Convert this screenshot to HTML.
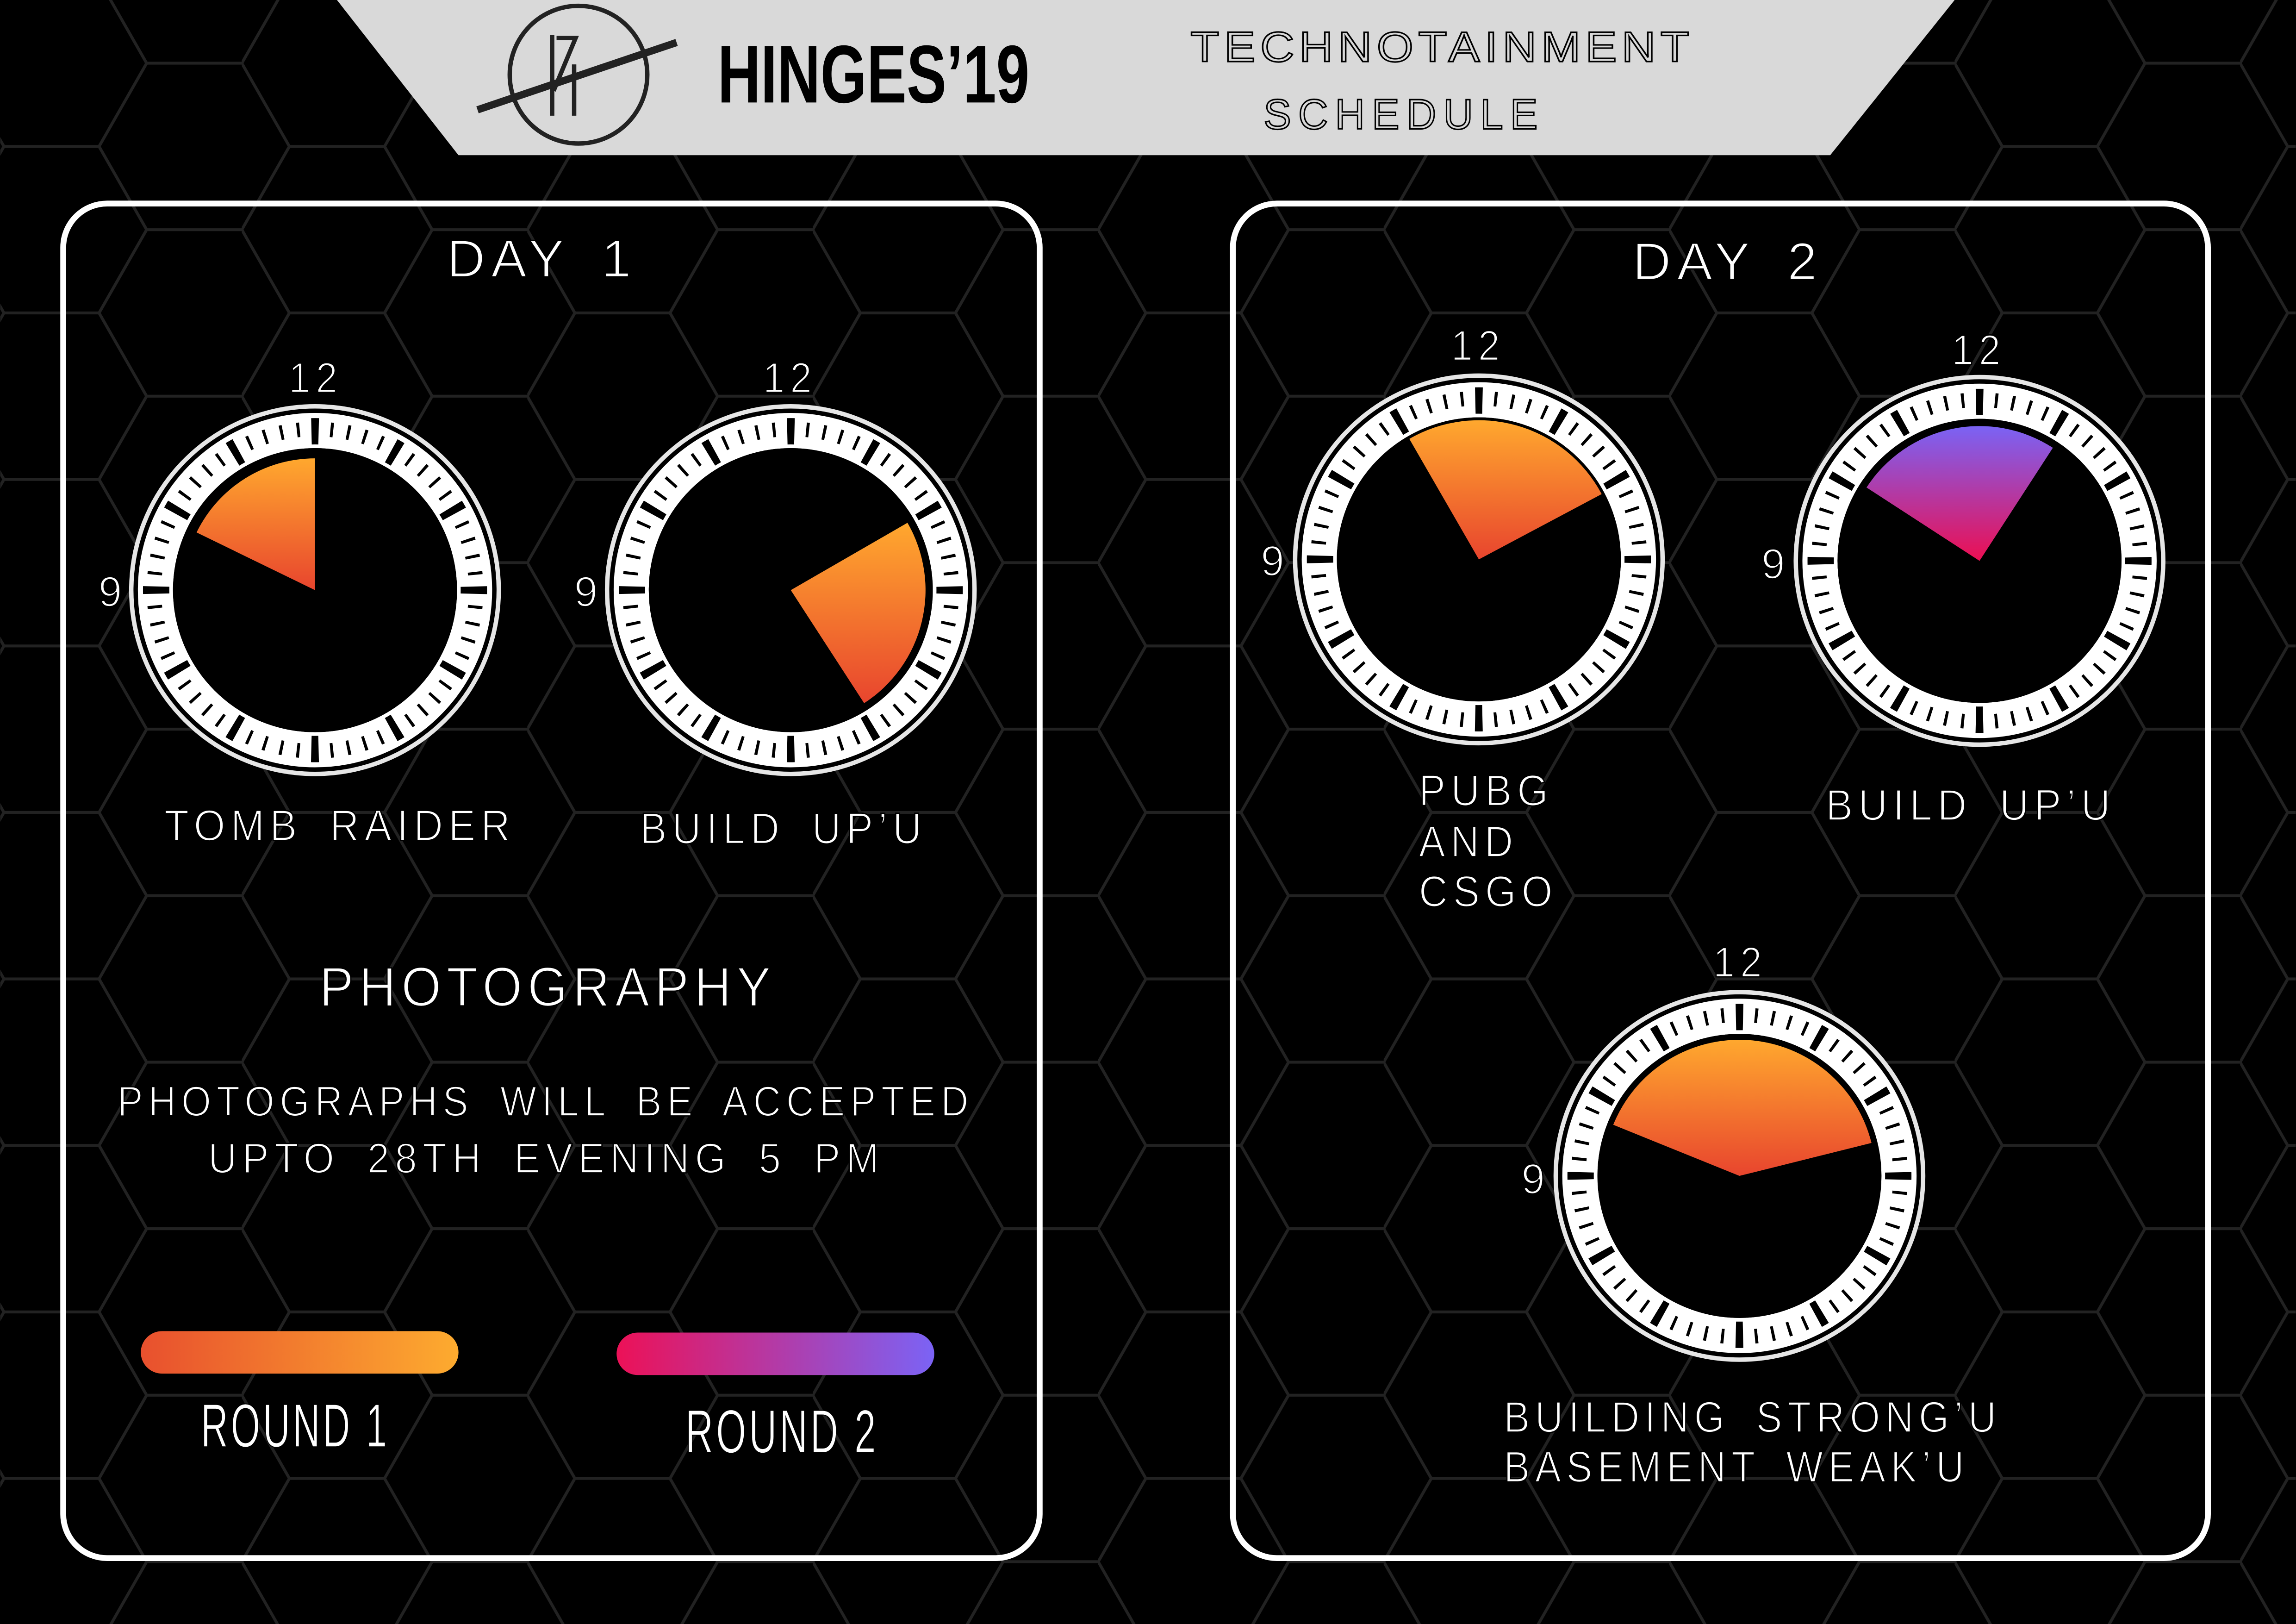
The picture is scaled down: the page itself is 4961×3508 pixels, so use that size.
<!DOCTYPE html>
<html><head><meta charset="utf-8"><style>
html,body{margin:0;padding:0;background:#000;}
svg{display:block;}
text{font-family:"Liberation Sans",sans-serif;}
.t{letter-spacing:4px;word-spacing:8px;}
</style></head><body>
<svg width="4961" height="3508" viewBox="0 0 1568 1109" xmlns="http://www.w3.org/2000/svg">
<defs>
<pattern id="hex" width="195" height="113.7" patternUnits="userSpaceOnUse" patternTransform="translate(-30,-13.7)">
<path d="M0,56.85 L32.5,0 L97.5,0 L130,56.85 L97.5,113.7 L32.5,113.7 Z M130,56.85 L195,56.85" fill="none" stroke="#222" stroke-width="2"/>
</pattern>
<linearGradient id="og" x1="0" y1="0" x2="0" y2="1"><stop offset="0" stop-color="#ffa82e"/><stop offset="1" stop-color="#e8452e"/></linearGradient>
<linearGradient id="pg" x1="0" y1="0" x2="0" y2="1"><stop offset="0" stop-color="#7a63f5"/><stop offset="1" stop-color="#ec0f52"/></linearGradient>
<linearGradient id="r1" x1="0" y1="0" x2="1" y2="0"><stop offset="0" stop-color="#e8502e"/><stop offset="1" stop-color="#fdab2f"/></linearGradient>
<linearGradient id="r2" x1="0" y1="0" x2="1" y2="0"><stop offset="0" stop-color="#ec1157"/><stop offset="1" stop-color="#7b63f5"/></linearGradient>
<g id="clock">
<circle r="125.5" fill="#000" stroke="#e6e6e6" stroke-width="3"/>
<circle r="109" fill="none" stroke="#fff" stroke-width="24"/>
<circle r="110" fill="none" stroke="#000" stroke-width="10" stroke-dasharray="2 9.519" stroke-dashoffset="1" transform="rotate(-90)"/>
<circle r="108.5" fill="none" stroke="#000" stroke-width="18" stroke-dasharray="5 51.81" stroke-dashoffset="2.5" transform="rotate(-90)"/>
<circle r="97" fill="#000"/>
</g>
</defs>
<rect width="1568" height="1109" fill="#000"/>
<rect width="1568" height="1109" fill="url(#hex)"/>

<!-- header -->
<polygon points="230,0 1335,0 1250,106 313,106" fill="#d9d9d9"/>
<circle cx="395" cy="51" r="47" fill="none" stroke="#222" stroke-width="3"/>
<line x1="377" y1="24" x2="377" y2="79" stroke="#222" stroke-width="3"/>
<line x1="392" y1="44" x2="392" y2="79" stroke="#222" stroke-width="3"/>
<polyline points="380,26 393,26 378,62" fill="none" stroke="#222" stroke-width="3"/>
<line x1="326" y1="75" x2="462" y2="29" stroke="#222" stroke-width="5"/>
<text x="490" y="70" font-size="56" font-weight="bold" textLength="213" lengthAdjust="spacingAndGlyphs" fill="#000">HINGES’19</text>
<text x="813" y="42" font-size="29" letter-spacing="3" textLength="344" lengthAdjust="spacingAndGlyphs" fill="#d9d9d9" stroke="#000" stroke-width="1">TECHNOTAINMENT</text>
<text x="863" y="88" font-size="29" letter-spacing="5" textLength="192" lengthAdjust="spacingAndGlyphs" fill="#d9d9d9" stroke="#000" stroke-width="1">SCHEDULE</text>

<!-- panels -->
<rect x="43" y="139" width="667" height="925" rx="30" fill="none" stroke="#fff" stroke-width="4"/>
<rect x="842" y="139" width="666" height="925" rx="30" fill="none" stroke="#fff" stroke-width="4"/>

<use href="#clock" x="215" y="403"/>
<path d="M215,403 L134.1,363.6 A90,90 0 0 1 215,313 Z" fill="url(#og)"/>
<use href="#clock" x="540" y="403"/>
<path d="M540,403 L619.7,357 A92,92 0 0 1 590.1,480.2 Z" fill="url(#og)"/>
<use href="#clock" x="1010" y="382"/>
<path d="M1010,382 L962.5,299.7 A95,95 0 0 1 1093.9,337.4 Z" fill="url(#og)"/>
<use href="#clock" x="1352" y="383"/>
<path d="M1352,383 L1274.8,332.9 A92,92 0 0 1 1402.1,305.8 Z" fill="url(#pg)"/>
<use href="#clock" x="1188" y="803"/>
<path d="M1188,803 L1101.8,768.1 A93,93 0 0 1 1278.2,780.5 Z" fill="url(#og)"/>

<g fill="#fff" stroke="#000" stroke-width="0.9" class="t">
<text x="305" y="189" font-size="36" textLength="130" lengthAdjust="spacingAndGlyphs">DAY 1</text>
<text x="1115" y="191" font-size="36" textLength="130" lengthAdjust="spacingAndGlyphs">DAY 2</text>

<text x="197" y="268" font-size="29" textLength="37" lengthAdjust="spacingAndGlyphs">12</text>
<text x="67" y="414" font-size="29" letter-spacing="0">9</text>
<text x="521" y="268" font-size="29" textLength="37" lengthAdjust="spacingAndGlyphs">12</text>
<text x="392" y="414" font-size="29" letter-spacing="0">9</text>

<text x="112" y="574" font-size="30" textLength="240" lengthAdjust="spacingAndGlyphs">TOMB RAIDER</text>
<text x="437" y="576" font-size="30" textLength="196" lengthAdjust="spacingAndGlyphs">BUILD UP’U</text>
<text x="218" y="687" font-size="38" textLength="312" lengthAdjust="spacingAndGlyphs">PHOTOGRAPHY</text>
<text x="80" y="762" font-size="29" textLength="585" lengthAdjust="spacingAndGlyphs">PHOTOGRAPHS WILL BE ACCEPTED</text>
<text x="142" y="801" font-size="29" textLength="462" lengthAdjust="spacingAndGlyphs">UPTO 28TH EVENING 5 PM</text>

<text x="991" y="246" font-size="29" textLength="37" lengthAdjust="spacingAndGlyphs">12</text>
<text x="861" y="393" font-size="29" letter-spacing="0">9</text>
<text x="1333" y="249" font-size="29" textLength="37" lengthAdjust="spacingAndGlyphs">12</text>
<text x="1203" y="395" font-size="29" letter-spacing="0">9</text>
<text x="1170" y="667" font-size="29" textLength="37" lengthAdjust="spacingAndGlyphs">12</text>
<text x="1039" y="815" font-size="29" letter-spacing="0">9</text>

<text x="969" y="550" font-size="30" textLength="92" lengthAdjust="spacingAndGlyphs">PUBG</text>
<text x="969" y="585" font-size="30" textLength="68" lengthAdjust="spacingAndGlyphs">AND</text>
<text x="969" y="619" font-size="30" textLength="95" lengthAdjust="spacingAndGlyphs">CSGO</text>
<text x="1247" y="560" font-size="30" textLength="198" lengthAdjust="spacingAndGlyphs">BUILD UP’U</text>
<text x="1027" y="978" font-size="30" textLength="340" lengthAdjust="spacingAndGlyphs">BUILDING STRONG’U</text>
<text x="1027" y="1012" font-size="30" textLength="318" lengthAdjust="spacingAndGlyphs">BASEMENT WEAK’U</text>
</g>

<rect x="96" y="909" width="217" height="29" rx="14.5" fill="url(#r1)"/>
<rect x="421" y="910" width="217" height="29" rx="14.5" fill="url(#r2)"/>
<g fill="#fff" stroke="#000" stroke-width="0.6">
<text x="137" y="988" font-size="42" letter-spacing="3" textLength="129" lengthAdjust="spacingAndGlyphs">ROUND 1</text>
<text x="468" y="992" font-size="42" letter-spacing="3" textLength="132" lengthAdjust="spacingAndGlyphs">ROUND 2</text>
</g>
</svg>
</body></html>
